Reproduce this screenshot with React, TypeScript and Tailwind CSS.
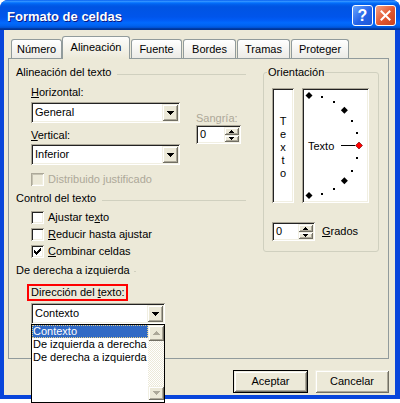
import React from 'react';

// classic 3D bevels (Luna beige palette)
const sunken =
  'shadow-[inset_1px_1px_0_#ACA899,inset_-1px_-1px_0_#FFFFFF,inset_2px_2px_0_#222222,inset_-2px_-2px_0_#F1EFE2]';
const sunkenDis =
  'shadow-[inset_1px_1px_0_#ACA899,inset_-1px_-1px_0_#FFFFFF,inset_2px_2px_0_#C5C2B2,inset_-2px_-2px_0_#F1EFE2]';
const raised =
  'shadow-[inset_1px_1px_0_#F1EFE2,inset_-1px_-1px_0_#716F64,inset_2px_2px_0_#FFFFFF,inset_-2px_-2px_0_#ACA899]';

function Tri({ up, small, color = '#000' }: { up?: boolean; small?: boolean; color?: string }) {
  const w = small ? 5 : 7;
  const h = small ? 3 : 4;
  const d = small
    ? up
      ? 'M2 0H3V1H4V2H5V3H0V2H1V1H2z'
      : 'M0 0H5V1H4V2H3V3H2V2H1V1H0z'
    : up
      ? 'M3 0H4V1H5V2H6V3H7V4H0V3H1V2H2V1H3z'
      : 'M0 0H7V1H6V2H5V3H4V4H3V3H2V2H1V1H0z';
  return (
    <svg width={w} height={h} viewBox={`0 0 ${w} ${h}`} shapeRendering="crispEdges">
      <path d={d} fill={color} />
    </svg>
  );
}

function Combo({ value, className = '' }: { value: string; className?: string }) {
  return (
    <div className={`flex h-[21px] items-center bg-white p-[2px] ${sunken} ${className}`}>
      <span className="flex-1 pl-[2px]">{value}</span>
      <div className={`flex h-[17px] w-[16px] items-center justify-center bg-[#ECE9D8] ${raised}`}>
        <Tri />
      </div>
    </div>
  );
}

function Spin({ className = '' }: { className?: string }) {
  return (
    <div className={`flex h-[19px] bg-white p-[2px] ${sunken} ${className}`}>
      <span className="flex flex-1 items-center pl-[2px]">0</span>
      <div className="flex w-[15px] flex-col">
        <div className={`flex h-[8px] items-center justify-center bg-[#ECE9D8] ${raised}`}>
          <Tri up small />
        </div>
        <div className={`flex h-[7px] items-center justify-center bg-[#ECE9D8] ${raised}`}>
          <Tri small />
        </div>
      </div>
    </div>
  );
}

function Check({ checked, disabled, children }: { checked?: boolean; disabled?: boolean; children: React.ReactNode }) {
  return (
    <div className="flex h-[13px] items-center">
      <div className={`relative h-[13px] w-[13px] ${disabled ? `bg-[#ECE9D8] ${sunkenDis}` : `bg-white ${sunken}`}`}>
        {checked && (
          <svg className="absolute left-0 top-0" width="13" height="13" viewBox="0 0 13 13" shapeRendering="crispEdges">
            <path
              d="M9 3h1v1H9zM8 4h2v1H8zM3 5h1v1H3zM7 5h3v1H7zM3 6h2v1H3zM6 6h3v1H6zM3 7h5v1H3zM4 8h3v1H4zM5 9h1v1H5z"
              fill="#000"
            />
          </svg>
        )}
      </div>
      <span className={`ml-[4px] ${disabled ? 'text-[#ACA899]' : ''}`}>{children}</span>
    </div>
  );
}

function Heading({ text, className = '', short }: { text: string; className?: string; short?: boolean }) {
  return (
    <div className={`flex h-[13px] ${className}`}>
      <span>{text}</span>
      {short ? (
        <div className="ml-[4px] mt-[7px] h-0 w-[2px] border-t border-[#D0D0BF]" />
      ) : (
        <div className="ml-[6px] mt-[8px] h-0 flex-1 border-t border-[#D0D0BF]" />
      )}
    </div>
  );
}

function Arc() {
  const cx = 7;
  const cy = 57.5;
  const r = 50;
  const marks = [90, 75, 60, 45, 30, 15, 0, -15, -30, -45, -60, -75, -90];
  return (
    <svg className="absolute left-0 top-0" width="67" height="115" viewBox="0 0 67 115">
      {marks.map((a) => {
        const x = cx + r * Math.cos((a * Math.PI) / 180);
        const y = cy - r * Math.sin((a * Math.PI) / 180);
        if (a === 0) {
          return (
            <polygon
              key={a}
              points={`${x},${y - 3.5} ${x + 3.5},${y} ${x},${y + 3.5} ${x - 3.5},${y}`}
              fill="#FF0000"
              stroke="#600000"
              strokeWidth="0.6"
            />
          );
        }
        if (Math.abs(a) === 90 || Math.abs(a) === 45) {
          return (
            <polygon key={a} points={`${x},${y - 3.5} ${x + 3.5},${y} ${x},${y + 3.5} ${x - 3.5},${y}`} fill="#000" />
          );
        }
        return <rect key={a} x={Math.round(x) - 1} y={Math.round(y) - 1} width="2" height="2" fill="#000" />;
      })}
      <line x1="39" y1="57.5" x2="53" y2="57.5" stroke="#000" strokeWidth="1" />
    </svg>
  );
}

function DropList() {
  return (
    <div className="absolute left-0 top-full z-20 flex h-[79px] w-[134px] border border-black bg-white">
      <div className="flex flex-1 flex-col">
        <div className="h-[13px] bg-[#316AC5] pl-[1px] text-white outline-1 outline-offset-[-1px] outline-dotted outline-[#E9D28A]">
          Contexto
        </div>
        <div className="h-[13px] pl-[1px]">De izquierda a derecha</div>
        <div className="h-[13px] pl-[1px]">De derecha a izquierda</div>
      </div>
      <div className="flex w-[16px] flex-col">
        <div className={`flex h-[16px] items-center justify-center bg-[#ECE9D8] ${raised}`}>
          <Tri up color="#ACA899" />
        </div>
        <div className="flex-1 bg-[repeating-conic-gradient(#ECE9D8_0_25%,#FFFFFF_0_50%)] bg-[length:2px_2px]" />
        <div className={`mb-[2px] flex h-[14px] items-center justify-center bg-[#ECE9D8] ${raised}`}>
          <Tri color="#ACA899" />
        </div>
      </div>
    </div>
  );
}

const tabs = [
  { label: 'Número', w: 'w-[51px] ml-0' },
  { label: 'Alineación', w: 'w-[68px] ml-0', active: true },
  { label: 'Fuente', w: 'w-[51px] ml-[1px]' },
  { label: 'Bordes', w: 'w-[53px] ml-[1px]' },
  { label: 'Tramas', w: 'w-[53px] ml-[1px]' },
  { label: 'Proteger', w: 'w-[58px] ml-[1px]' },
];

export default function App() {
  return (
    <div className="relative h-[403px] w-[400px] overflow-hidden bg-white font-['Liberation_Sans',Arial,sans-serif] text-[11px] leading-[13px] text-black">
      <div className="flex h-[399px] flex-col rounded-t-[8px] bg-[#0845DB]">
        {/* Title bar */}
        <div className="flex h-[30px] rounded-t-[8px] bg-[linear-gradient(180deg,#0058EE_0%,#3593FF_4%,#288EFF_6%,#127DFF_8%,#036FFC_10%,#0262EE_14%,#0057E5_20%,#0054E3_24%,#0055EB_56%,#005BF5_66%,#026AFE_76%,#0062EF_86%,#0052D6_92%,#0040AB_94%,#003092_100%)] pl-[7px] pr-[4px]">
          <span className="mt-[9px] text-[13px] font-bold leading-[16px] text-white [text-shadow:1px_1px_#0A1883]">
            Formato de celdas
          </span>
          <div className="flex-1" />
          <div className="mt-[5px] flex h-[21px] w-[21px] items-center justify-center rounded-[3px] border border-white bg-[linear-gradient(135deg,#6AA6FF,#2563E8_55%,#1E58D8)] text-[16px] font-bold leading-[16px] text-white">
            ?
          </div>
          <div className="ml-[2px] mt-[5px] flex h-[21px] w-[21px] items-center justify-center rounded-[3px] border border-white bg-[linear-gradient(135deg,#F4A084,#E2562F_55%,#C9431F)]">
            <svg width="11" height="11" viewBox="0 0 11 11">
              <path d="M1.5 1.5l8 8M9.5 1.5l-8 8" stroke="#fff" strokeWidth="2" strokeLinecap="square" />
            </svg>
          </div>
        </div>

        {/* Client area */}
        <div className="mb-[4px] ml-[4px] mr-[5px] flex flex-1 flex-col bg-[#ECE9D8] pl-[4px] pr-[6px] pt-[6px]">
          {/* Tabs */}
          <div className="flex h-[22px] items-end pl-[3px]">
            {tabs.map((t) =>
              t.active ? (
                <div
                  key={t.label}
                  className={`relative z-10 -mb-[1px] h-[23px] rounded-t-[3px] border border-b-0 border-[#919B9C] bg-[linear-gradient(#FDFDFB,#ECE9D8)] pt-[4px] text-center ${t.w}`}
                >
                  {t.label}
                </div>
              ) : (
                <div
                  key={t.label}
                  className={`h-[19px] rounded-t-[3px] border border-b-0 border-[#919B9C] bg-[linear-gradient(#FFFFFF,#ECEBE6)] pt-[3px] text-center ${t.w}`}
                >
                  {t.label}
                </div>
              ),
            )}
          </div>

          {/* Panel */}
          <div className="flex h-[301px] items-start border border-[#919B9C] pl-[7px] pt-[7px]">
            <div className="flex w-[230px] flex-col">
              <Heading text="Alineación del texto" />
              <div className="flex pl-[15px]">
                <div className="flex w-[149px] flex-col">
                  <div className="mt-[7px]">
                    <u>H</u>orizontal:
                  </div>
                  <Combo className="mt-[3px] w-[149px]" value="General" />
                  <div className="mt-[6px]">
                    <u>V</u>ertical:
                  </div>
                  <Combo className="mt-[2px] w-[149px]" value="Inferior" />
                </div>
                <div className="ml-[16px] mt-[33px] flex flex-col">
                  <div className="text-[#ACA899]">Sangría:</div>
                  <Spin className="w-[45px]" />
                </div>
              </div>
              <div className="mt-[8px] pl-[15px]">
                <Check disabled>Distribuido justificado</Check>
              </div>

              <Heading className="mt-[6px]" text="Control del texto" />
              <div className="mt-[6px] flex flex-col gap-[4px] pl-[15px]">
                <Check>
                  Ajustar te<u>x</u>to
                </Check>
                <Check>
                  <u>R</u>educir hasta ajustar
                </Check>
                <Check checked>
                  <u>C</u>ombinar celdas
                </Check>
              </div>

              <Heading className="mt-[6px]" text="De derecha a izquierda" short />
              <div className="flex flex-col items-start pl-[15px]">
                <div className="-ml-[4px] mt-[7px] h-[17px] border-2 border-[#FF0000] pl-[2px] pr-[1px]">
                  Dirección del <u>t</u>exto:
                </div>
                <div className="relative mt-[2px] w-[134px]">
                  <Combo className="w-[134px]" value="Contexto" />
                  <DropList />
                </div>
              </div>
            </div>

            {/* Orientación */}
            <fieldset className="ml-[17px] w-[116px] rounded-[3px] border border-[#D0D0BF] p-0">
              <legend className="ml-[3px] px-[1px]">Orientación</legend>
              <div className="pb-[10px] pl-[8px]">
                <div className="mt-[9px] flex">
                  <div className={`flex h-[115px] w-[22px] flex-col items-center justify-center bg-white pt-[3px] ${sunken}`}>
                    <span>T</span>
                    <span>e</span>
                    <span>x</span>
                    <span>t</span>
                    <span>o</span>
                  </div>
                  <div className={`relative ml-[8px] flex h-[115px] w-[67px] items-center bg-white pl-[6px] pt-[2px] ${sunken}`}>
                    <span>Texto</span>
                    <Arc />
                  </div>
                </div>
                <div className="mt-[19px] flex items-center">
                  <Spin className="w-[43px]" />
                  <span className="ml-[7px]">
                    <u>G</u>rados
                  </span>
                </div>
              </div>
            </fieldset>
          </div>

          {/* Buttons */}
          <div className="mt-[11px] flex justify-end gap-[7px]">
            <div className="h-[23px] w-[75px] border border-black">
              <div className={`flex h-full items-center justify-center bg-[#ECE9D8] ${raised}`}>Aceptar</div>
            </div>
            <div className={`flex h-[23px] w-[74px] items-center justify-center bg-[#ECE9D8] ${raised}`}>Cancelar</div>
          </div>
        </div>
      </div>
    </div>
  );
}
